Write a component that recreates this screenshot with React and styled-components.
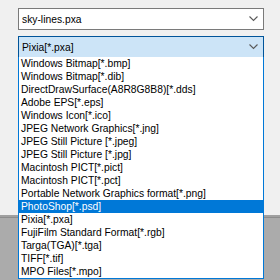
import React from "react";
import styled, { createGlobalStyle } from "styled-components";

const Global = createGlobalStyle`
  html, body { margin: 0; padding: 0; }
  body { width: 280px; height: 280px; overflow: hidden; font-family: "Liberation Sans", Arial, sans-serif; }
`;

const Page = styled.div`
  position: relative;
  width: 280px;
  height: 280px;
  display: flex;
  flex-direction: column;
`;

const Dialog = styled.div`
  height: 215px;
  background: #f0f0f0;
  padding: 8px 0 0 18px;
  box-sizing: border-box;
  display: flex;
  flex-direction: column;
  gap: 6px;
`;

const Separator = styled.div`
  height: 2px;
  background: #a0a0a0;
  border-bottom: 1px solid #8c8c8c;
`;

const Workspace = styled.div`
  flex: 1;
  background: #ababab;
`;

const Combo = styled.div`
  width: 246px;
  height: 22px;
  box-sizing: border-box;
  border: 1px solid ${(p) => (p.$focused ? "#005499" : "#7a7a7a")};
  background: ${(p) => (p.$focused ? "#cce4f7" : "#ffffff")};
  display: flex;
  align-items: center;
  padding: 0 0 0 3px;
  font-size: 10.3px;
  color: #000;
  position: relative;
`;

const ComboText = styled.span`
  flex: 1;
  line-height: 13px;
`;

const Chevron = styled.svg`
  width: 9px;
  height: 6px;
  margin-right: 5px;
`;

const List = styled.div`
  position: absolute;
  left: 18px;
  top: 57px;
  width: 246px;
  box-sizing: border-box;
  border: 1px solid #0078d7;
  border-top: none;
  background: #fff;
  display: flex;
  flex-direction: column;
`;

const Item = styled.div`
  height: 13px;
  line-height: 13px;
  font-size: 10.3px;
  padding-left: 2px;
  white-space: nowrap;
  color: ${(p) => (p.$selected ? "#ffffff" : "#000")};
  background: ${(p) => (p.$selected ? "#0078d7" : "transparent")};
`;

const items = [
  "Windows Bitmap[*.bmp]",
  "Windows Bitmap[*.dib]",
  "DirectDrawSurface(A8R8G8B8)[*.dds]",
  "Adobe EPS[*.eps]",
  "Windows Icon[*.ico]",
  "JPEG Network Graphics[*.jng]",
  "JPEG Still Picture [*.jpeg]",
  "JPEG Still Picture [*.jpg]",
  "Macintosh PICT[*.pict]",
  "Macintosh PICT[*.pct]",
  "Portable Network Graphics format[*.png]",
  "PhotoShop[*.psd]",
  "Pixia[*.pxa]",
  "FujiFilm Standard Format[*.rgb]",
  "Targa(TGA)[*.tga]",
  "TIFF[*.tif]",
  "MPO Files[*.mpo]",
];

const Arrow = () => (
  <Chevron viewBox="0 0 9 6">
    <path d="M0.5 0.5 L4.5 4.5 L8.5 0.5" fill="none" stroke="#5a5a5a" strokeWidth="1.1" />
  </Chevron>
);

export default function App() {
  return (
    <>
      <Global />
      <Page>
        <Dialog>
          <Combo>
            <ComboText>sky-lines.pxa</ComboText>
            <Arrow />
          </Combo>
          <Combo $focused>
            <ComboText>Pixia[*.pxa]</ComboText>
            <Arrow />
          </Combo>
        </Dialog>
        <Separator />
        <Workspace />
        <List>
          {items.map((t) => (
            <Item key={t} $selected={t === "PhotoShop[*.psd]"}>
              {t}
            </Item>
          ))}
        </List>
      </Page>
    </>
  );
}
